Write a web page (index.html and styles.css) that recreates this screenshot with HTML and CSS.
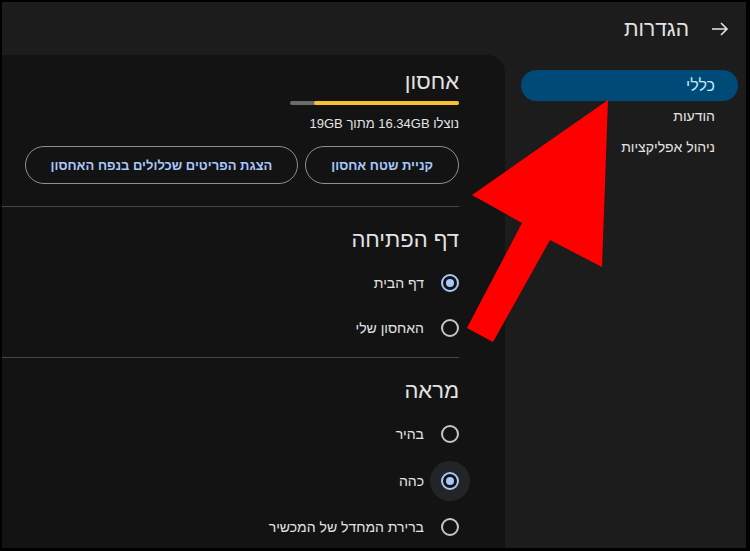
FILE: index.html
```html
<!DOCTYPE html>
<html lang="he" dir="rtl">
<head>
  <meta charset="UTF-8">
  <title>הגדרות</title>
  <link rel="stylesheet" href="styles.css">
</head>
<body>

  <div class="frame">
    <header class="topbar">
      <svg class="back" width="18" height="14" viewBox="0 0 18 14">
        <path d="M1 7 H16 M10 1 L16 7 L10 13" fill="none" stroke="#e3e3e3" stroke-width="1.6"/>
      </svg>
      <h1 class="title">הגדרות</h1>
    </header>

    <div class="main">
      <nav class="nav">
        <a class="nav-item active">כללי</a>
        <a class="nav-item">הודעות</a>
        <a class="nav-item">ניהול אפליקציות</a>
      </nav>

      <section class="panel">
        <h2 class="heading first">אחסון</h2>
        <div class="bar"><div class="bar-fill" style="width: 86%"></div></div>
        <p class="usage">נוצלו 16.34GB מתוך 19GB</p>
        <div class="btn-row">
          <button class="pill">קניית שטח אחסון</button>
          <button class="pill">הצגת הפריטים שכלולים בנפח האחסון</button>
        </div>

        <hr class="divider first-divider">

        <h2 class="heading">דף הפתיחה</h2>
        <div class="options start">
          <label class="option"><span class="radio checked"></span>דף הבית</label>
          <label class="option"><span class="radio"></span>האחסון שלי</label>
        </div>

        <hr class="divider">

        <h2 class="heading">מראה</h2>
        <div class="options look">
          <label class="option"><span class="radio"></span>בהיר</label>
          <label class="option"><span class="radio checked hover"></span>כהה</label>
          <label class="option"><span class="radio"></span>ברירת המחדל של המכשיר</label>
        </div>
      </section>
    </div>

    <!-- red pointer drawn over the screenshot -->
    <svg class="pointer" width="750" height="551" viewBox="0 0 750 551">
      <polygon points="608,100 602,267 550,240 493,342 467,328 522,223 472,195" fill="#ff0000"/>
    </svg>
  </div>

</body>
</html>
```

FILE: styles.css
```css
* {
  box-sizing: border-box;
}
body {
  margin: 0;
  font-family: "Liberation Sans", Arial, sans-serif;
  color: #e3e3e3;
  background-color: #000;
}
.frame {
  position: relative;
  width: 750px;
  height: 551px;
  border-style: solid;
  border-color: #000;
  border-width: 2px 4px 3px 2px;
  background-color: #1c1c1c;
  display: flex;
  flex-direction: column;
  overflow: hidden;
}
.topbar {
  height: 53px;
  flex-shrink: 0;
  display: flex;
  align-items: center;
  gap: 22px;
  padding-right: 17px;
}
.title {
  margin: 0;
  font-size: 21px;
  font-weight: normal;
  color: #e3e3e3;
}
.main {
  flex: 1;
  display: flex;
  min-height: 0;
}
.nav {
  width: 241px;
  flex-shrink: 0;
  padding: 15px 8px 0 16px;
  display: flex;
  flex-direction: column;
}
.nav-item {
  height: 31px;
  line-height: 31px;
  padding-right: 23px;
  font-size: 14px;
  color: #e3e3e3;
  border-radius: 16px;
}
.nav-item.active {
  background-color: #004a77;
  color: #c2e7ff;
  font-size: 16px;
}
.panel {
  flex: 1;
  background-color: #131314;
  border-top-right-radius: 18px;
  padding: 13px 46px 0 0;
}
.heading {
  margin: 19px 0 0;
  font-size: 22px;
  line-height: 28px;
  font-weight: normal;
  color: #e3e3e3;
}
.heading.first {
  margin-top: 0;
}
.bar {
  width: 169px;
  height: 4px;
  margin-top: 5px;
  border-radius: 2px;
  background-color: #6b6b6b;
}
.bar-fill {
  height: 4px;
  border-radius: 2px;
  background-color: #f7c12f;
}
.usage {
  margin: 9px 0 0;
  font-size: 13px;
  line-height: 20px;
  color: #e3e3e3;
}
.btn-row {
  margin-top: 12px;
  display: flex;
  gap: 7px;
}
.pill {
  height: 38px;
  padding: 0 25px;
  border: 1px solid #8e918f;
  border-radius: 19px;
  background: transparent;
  color: #a8c7fa;
  font-family: inherit;
  font-size: 13px;
  font-weight: bold;
}
.divider {
  margin: 7px 0 0;
  border: none;
  height: 1px;
  background-color: #444746;
}
.first-divider {
  margin-top: 22px;
}
.options.start {
  margin-top: 6px;
}
.options.start .option {
  height: 45px;
}
.options.look {
  margin-top: 6px;
}
.options.look .option {
  height: 46.5px;
}
.option {
  display: flex;
  align-items: center;
  gap: 17px;
  font-size: 14px;
  color: #e3e3e3;
}
.radio {
  width: 18px;
  height: 18px;
  border: 2px solid #c4c7c5;
  border-radius: 50%;
  display: flex;
  align-items: center;
  justify-content: center;
}
.radio.checked {
  border-color: #a8c7fa;
}
.radio.checked::after {
  content: "";
  width: 8px;
  height: 8px;
  border-radius: 50%;
  background-color: #a8c7fa;
}
.radio.hover {
  box-shadow: 0 0 0 11px rgba(200, 215, 235, 0.09);
}
.pointer {
  position: absolute;
  top: -2px;
  left: -2px;
  pointer-events: none;
}
```
